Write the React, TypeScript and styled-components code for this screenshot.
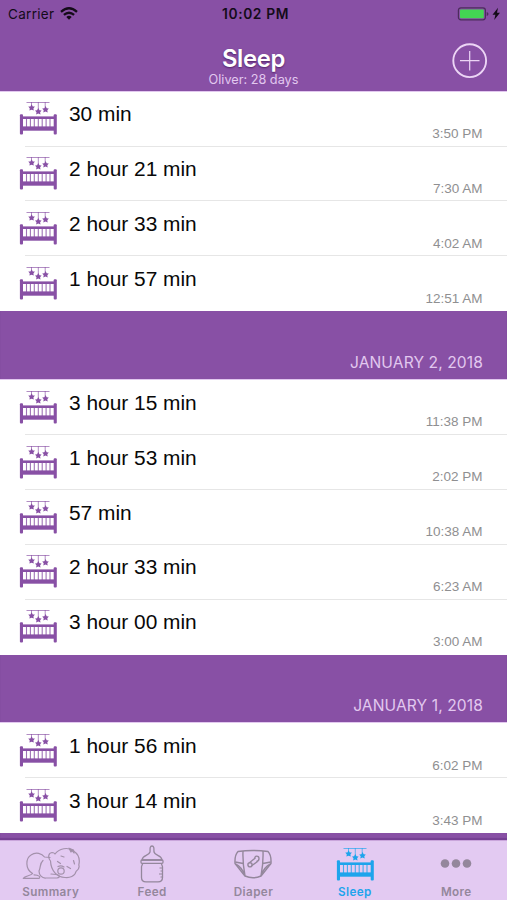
import React from 'react';
import styled, { createGlobalStyle } from 'styled-components';

const Global = createGlobalStyle`
  * { box-sizing: border-box; }
  body { margin: 0; background: #8850a5; }
`;

const Screen = styled.div`
  width: 507px;
  height: 900px;
  overflow: hidden;
  display: flex;
  flex-direction: column;
  background: #8850a5;
  font-family: Inter, sans-serif;
`;

const Header = styled.header`
  height: 91.6px;
  flex: none;
  border-bottom: 1px solid #e2c8ef;
`;

const StatusBar = styled.div`
  height: 27px;
  display: grid;
  grid-template-columns: 1fr auto 1fr;
  align-items: center;
  padding: 0 6px 0 8px;
  color: #140b19;
`;

const Carrier = styled.div`
  display: flex;
  align-items: center;
  gap: 6px;
  font-size: 13.5px;
  letter-spacing: 0.3px;
`;

const Clock = styled.div`
  font-weight: 600;
  font-size: 13.8px;
  letter-spacing: 0.6px;
  padding-left: 2px;
`;

const Power = styled.div`
  display: flex;
  justify-content: flex-end;
`;

const NavBar = styled.div`
  height: 63px;
  display: grid;
  grid-template-columns: 1fr auto 1fr;
  padding-right: 19px;
`;

const TitleBlock = styled.div`
  grid-column: 2;
  display: flex;
  flex-direction: column;
  align-items: center;
  padding: 19px 0 0 19px;
`;

const Title = styled.h1`
  margin: 0;
  font-size: 23.8px;
  line-height: 26px;
  font-weight: 600;
  letter-spacing: -0.3px;
  color: #fff;
  text-shadow: 0 1px 2px rgba(40, 0, 60, 0.6);
`;

const Subtitle = styled.div`
  font-size: 12.7px;
  line-height: 15px;
  color: #e2c8ef;
`;

const AddButton = styled.button`
  justify-self: end;
  width: 36px;
  height: 36px;
  margin-top: 16px;
  padding: 0;
  border: 0;
  background: none;
`;

const Content = styled.main`
  flex: 1;
  min-height: 0;
  overflow: hidden;
  box-shadow: inset 0 -2px 1px #753f93;
`;

const SectionHeader = styled.h2`
  height: 68.6px;
  margin: 0;
  padding: 0 24px 8px 0;
  display: flex;
  align-items: flex-end;
  justify-content: flex-end;
  border-bottom: 1px solid #e2c8ef;
  color: #e2c8ef;
  font-size: 15.6px;
  line-height: 17px;
  font-weight: 400;
  letter-spacing: 0.1px;
`;

const Row = styled.div`
  height: 54.95px;
  display: flex;
  padding: 9.7px 24.5px 0 19px;
  background: linear-gradient(#e6e6e6, #e6e6e6) 25px 100% / 100% 1px no-repeat #fff;

  &:last-child { background: #fff; }
`;

const Duration = styled.div`
  flex: 1;
  padding-left: 12px;
  font: 20.9px/26px 'Liberation Sans', sans-serif;
  color: #080808;
`;

const Time = styled.time`
  align-self: flex-end;
  padding-bottom: 3.6px;
  font: 13.5px/18px 'Liberation Sans', sans-serif;
  color: #8f8f91;
`;

const TabBar = styled.nav`
  height: 60px;
  flex: none;
  display: grid;
  grid-template-columns: repeat(5, 1fr);
  background: #e3caf2;
  border-top: 1px solid #c9a5db;
`;

const Tab = styled.button<{ $active?: boolean }>`
  border: 0;
  padding: 4px 0 0;
  background: none;
  display: flex;
  flex-direction: column;
  align-items: center;
  gap: 1px;
  color: ${p => (p.$active ? '#1da4ec' : '#94879c')};
  font: 600 11.7px/16px Inter, sans-serif;
  letter-spacing: 0.4px;
`;

const IconSlot = styled.span`
  height: 38px;
  display: flex;
  align-items: center;
`;

const star = 'M0-3.3 1.2-1.2 3.3-1 1.8.8 2.2 3 0 2.1-2.2 3-1.8.8-3.3-1-1.2-1.2Z';

function Crib({ color }: { color: string }) {
  return (
    <svg width="38" height="35" viewBox="0 0 38 35" fill={color}>
      <path d="M7.5 1.5H30.500M12.500 1V5M19.300 1V9M26.200 1V6" fill="none" stroke={color} strokeWidth="1" opacity=".65" />
      <path d={star} transform="translate(12.6 6.6)" />
      <path d={star} transform="translate(19.3 10.4)" />
      <path d={star} transform="translate(26.5 8.4)" />
      <rect x=".9" y="13.3" width="3.1" height="20.3" rx="1" />
      <rect x="34.700" y="13.3" width="3.1" height="20.3" rx="1" />
      <rect x="3" y="15.4" width="32.500" height="2.6" />
      <rect x="3" y="25.4" width="32.500" height="4.300" />
      <path d="M7.500 17V26M11.400 17V26M15.300 17V26M19.300 17V26M23.200 17V26M27.100 17V26M31 17V26" stroke={color} strokeWidth="1.100" opacity=".8" />
    </svg>
  );
}

function Wifi() {
  return (
    <svg width="18" height="13" viewBox="0 0 18 13" fill="none" stroke="#140b19" strokeWidth="2.3">
      <path d="M1 4.8Q9-2.2 17 4.8M3.9 7.9Q9 3.5 14.1 7.9" />
      <path d="M9 12.7 6.3 9.9Q9 7.6 11.7 9.9Z" fill="#140b19" stroke="none" />
    </svg>
  );
}

function Battery() {
  return (
    <svg width="44" height="14" viewBox="0 0 44 14">
      <rect x="1.4" y=".8" width="27" height="12" rx="2.5" fill="none" stroke="#4c2c5c" strokeWidth="1.2" />
      <rect x="3" y="2.4" width="23.8" height="8.8" rx="1" fill="#43d653" />
      <path d="M29.7 5V9Q31.5 8.5 31.5 7T29.7 5Z" fill="#4c2c5c" />
      <path d="M41 .8 35.5 7.8H38.4L37.2 13 43 5.7H40Z" fill="#140b19" />
    </svg>
  );
}

function Plus() {
  return (
    <svg width="36" height="36" viewBox="0 0 36 36" fill="none" stroke="#ecd5f5">
      <circle cx="17.7" cy="17.7" r="16.4" strokeWidth="1.9" />
      <path d="M8 17.7H27.5M17.7 8V27.5" strokeWidth="1.2" />
    </svg>
  );
}

function Baby() {
  return (
    <svg width="58" height="38" viewBox="0 0 58 38" fill="none" stroke="#a391ab" strokeWidth="1.2" strokeLinecap="round" strokeLinejoin="round">
      <path d="M10.5 28.5C3 24 3.5 13.5 9 10C14 6.5 20 8.5 22.5 12L28 12.5" />
      <path d="M10.5 28.5C9 31 3 30.5 1.3 33.4H17C19 32 17 30 12 29.8" />
      <path d="M21 15.5C17.5 18.5 19 22 17 26C17 30 20 33.5 24 33H35C39 32.5 37.5 29.5 34 29.5L29 29" />
      <path d="M28.5 16C25.5 12 26.5 8 30 7.5Q32 7.5 33 9C37 3.5 46 1.5 51.5 6C57 9.5 58 15 56.8 20C58 23 56 25 54 26.5C53 31.5 47.5 33 43 32.5C35 32 29 26 28.5 16Z" />
      <circle cx="39" cy="26" r="3.2" />
      <path d="M36 21.5Q39 20 42 22M35.5 16.5 38.5 18.5M45 21.5 48.5 23.5M39 11 42 12M51.5 15.5 52.5 19" />
      <path d="M47 3.2 49 7 50 5.5 52 8 51.5 5Z" fill="#94879c" />
    </svg>
  );
}

function Bottle() {
  return (
    <svg width="26" height="38" viewBox="0 0 26 38" fill="none" stroke="#94879c" strokeWidth="1.3" strokeLinejoin="round">
      <path d="M3 15C3.5 10 10 11 11 7C11.3 5 10.3 1 13 1S14.7 5 15 7C16 11 22.5 10 23 15Z" />
      <rect x="2" y="15" width="22" height="3.3" rx="1" />
      <path d="M3.6 18.3C3.6 20 2.5 20.5 2.5 22V32.5Q2.5 36.8 7 36.8H19Q23.5 36.8 23.5 32.5V22C23.5 20.5 22.4 20 22.4 18.3" />
      <path d="M20.5 23H23M21.5 26H23M20 29H23M21.5 32H23" strokeWidth="1" />
    </svg>
  );
}

function Diaper() {
  return (
    <svg width="40" height="38" viewBox="0 0 40 38" fill="none" stroke="#94879c" strokeWidth="1.4" strokeLinejoin="round">
      <path d="M5 6.5Q20 4.5 35 6.5Q38.5 10 38 18.5C35 22 31.5 27 28 31Q20 34.5 12 31C8.5 27 5 22 2 18.5Q1.5 10 5 6.5Z" />
      <path d="M10 6Q9.5 18 12 31M30 6Q30.5 18 28 31M2.2 17 10.2 18.5M29.8 18.5 37.8 17M2.5 19Q9 22 12 31M37.5 19Q31 22 28 31" />
      <path d="M16.4 17.8 22 13.2M18.6 20.8 24.5 16.5" />
      <circle cx="17" cy="19.8" r="2.1" />
      <path d="M22 14C21 10.5 26 10 26 13.5Q26 16 23.5 16.5" />
    </svg>
  );
}

function Dots() {
  return (
    <svg width="32" height="38" viewBox="0 0 32 38" fill="#94879c">
      <circle cx="5" cy="18.5" r="4.3" /><circle cx="16" cy="18.5" r="4.3" /><circle cx="27" cy="18.5" r="4.3" />
    </svg>
  );
}

const sections = [
  { date: '', rows: [['30 min', '3:50 PM'], ['2 hour 21 min', '7:30 AM'], ['2 hour 33 min', '4:02 AM'], ['1 hour 57 min', '12:51 AM']] },
  { date: 'JANUARY 2, 2018', rows: [['3 hour 15 min', '11:38 PM'], ['1 hour 53 min', '2:02 PM'], ['57 min', '10:38 AM'], ['2 hour 33 min', '6:23 AM'], ['3 hour 00 min', '3:00 AM']] },
  { date: 'JANUARY 1, 2018', rows: [['1 hour 56 min', '6:02 PM'], ['3 hour 14 min', '3:43 PM']] },
];

export default function App() {
  return (
    <Screen>
      <Global />
      <Header>
        <StatusBar>
          <Carrier>Carrier <Wifi /></Carrier>
          <Clock>10:02 PM</Clock>
          <Power><Battery /></Power>
        </StatusBar>
        <NavBar>
          <TitleBlock>
            <Title>Sleep</Title>
            <Subtitle>Oliver: 28 days</Subtitle>
          </TitleBlock>
          <AddButton aria-label="Add"><Plus /></AddButton>
        </NavBar>
      </Header>
      <Content>
        {sections.map(({ date, rows }) => (
          <section key={date}>
            {date && <SectionHeader>{date}</SectionHeader>}
            {rows.map(([duration, time]) => (
              <Row key={time}>
                <Crib color="#8850a5" />
                <Duration>{duration}</Duration>
                <Time>{time}</Time>
              </Row>
            ))}
          </section>
        ))}
      </Content>
      <TabBar>
        <Tab><IconSlot><Baby /></IconSlot>Summary</Tab>
        <Tab><IconSlot><Bottle /></IconSlot>Feed</Tab>
        <Tab><IconSlot><Diaper /></IconSlot>Diaper</Tab>
        <Tab $active><IconSlot><Crib color="#1da4ec" /></IconSlot>Sleep</Tab>
        <Tab><IconSlot><Dots /></IconSlot>More</Tab>
      </TabBar>
    </Screen>
  );
}
